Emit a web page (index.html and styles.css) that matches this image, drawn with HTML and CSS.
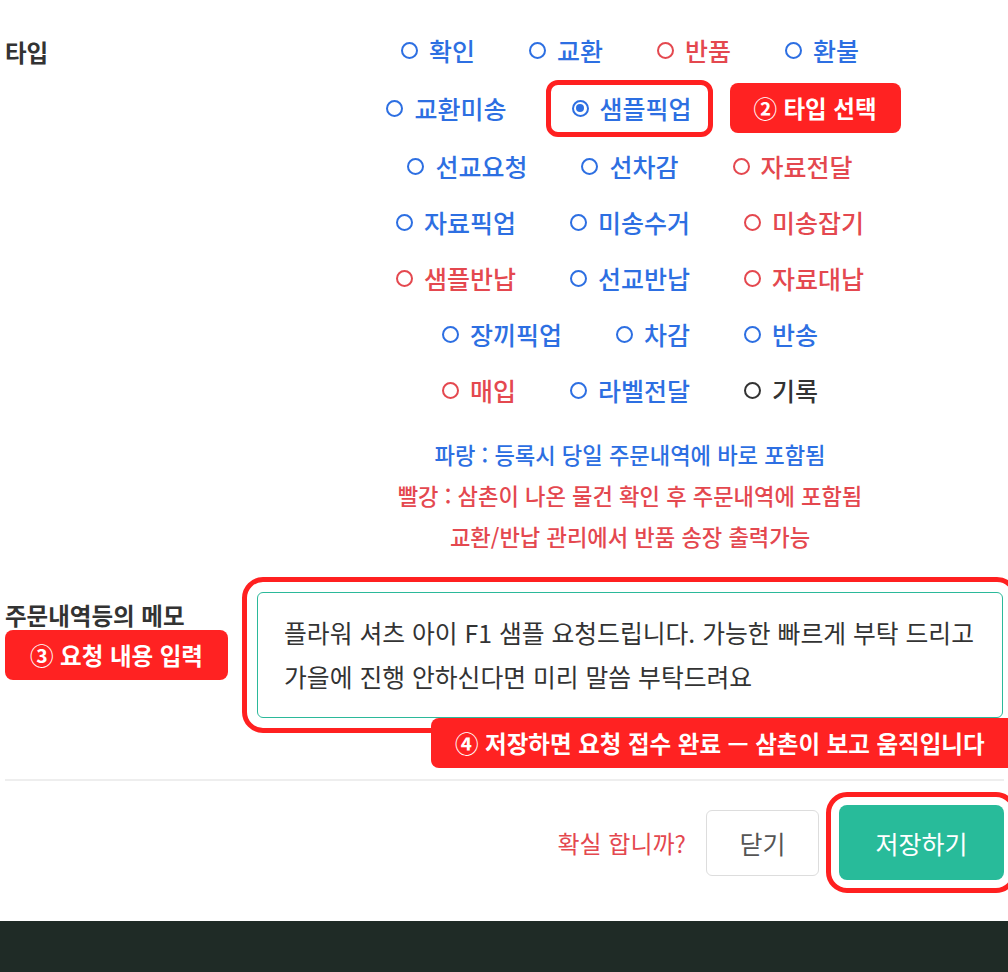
FILE: index.html
```html
<!DOCTYPE html>
<html lang="ko">
<head>
<meta charset="utf-8">
<title>타입 선택</title>
<link rel="stylesheet" href="styles.css">
</head>
<body>
<div class="page">
  <div class="field field-type">
    <div class="label">타입</div>
    <div class="control">
      <div class="opt-row">
        <span class="opt blue"><i class="radio"></i>확인</span>
        <span class="opt blue"><i class="radio"></i>교환</span>
        <span class="opt red"><i class="radio"></i>반품</span>
        <span class="opt blue"><i class="radio"></i>환불</span>
      </div>
      <div class="opt-row opt-row-sel">
        <span class="opt blue opt-before-sel"><i class="radio"></i>교환미송</span>
        <span class="opt blue opt-sel"><i class="radio checked"></i>샘플픽업</span>
        <span class="badge badge-type">② 타입 선택</span>
      </div>
      <div class="opt-row">
        <span class="opt blue"><i class="radio"></i>선교요청</span>
        <span class="opt blue"><i class="radio"></i>선차감</span>
        <span class="opt red"><i class="radio"></i>자료전달</span>
      </div>
      <div class="opt-row">
        <span class="opt blue"><i class="radio"></i>자료픽업</span>
        <span class="opt blue"><i class="radio"></i>미송수거</span>
        <span class="opt red"><i class="radio"></i>미송잡기</span>
      </div>
      <div class="opt-row">
        <span class="opt red"><i class="radio"></i>샘플반납</span>
        <span class="opt blue"><i class="radio"></i>선교반납</span>
        <span class="opt red"><i class="radio"></i>자료대납</span>
      </div>
      <div class="opt-row">
        <span class="opt blue"><i class="radio"></i>장끼픽업</span>
        <span class="opt blue"><i class="radio"></i>차감</span>
        <span class="opt blue"><i class="radio"></i>반송</span>
      </div>
      <div class="opt-row">
        <span class="opt red"><i class="radio"></i>매입</span>
        <span class="opt blue"><i class="radio"></i>라벨전달</span>
        <span class="opt dark"><i class="radio"></i>기록</span>
      </div>
      <div class="notes">
        <p class="note blue">파랑 : 등록시 당일 주문내역에 바로 포함됨</p>
        <p class="note red">빨강 : 삼촌이 나온 물건 확인 후 주문내역에 포함됨</p>
        <p class="note red">교환/반납 관리에서 반품 송장 출력가능</p>
      </div>
    </div>
  </div>

  <div class="field field-memo">
    <div class="label label-memo">
      <div>주문내역등의 메모</div>
      <span class="badge badge-memo">③ 요청 내용 입력</span>
    </div>
    <div class="control memo-wrap">
      <div class="memo-box">
        <div class="memo-line">플라워 셔츠 아이 F1 샘플 요청드립니다. 가능한 빠르게 부탁 드리고</div>
        <div class="memo-line">가을에 진행 안하신다면 미리 말씀 부탁드려요</div>
      </div>
      <span class="badge badge-save">④ 저장하면 요청 접수 완료 — 삼촌이 보고 움직입니다</span>
    </div>
  </div>

  <div class="actions">
    <span class="confirm">확실 합니까?</span>
    <button class="btn btn-close" type="button">닫기</button>
    <button class="btn btn-save" type="button">저장하기</button>
  </div>
</div>
<footer class="footer"></footer>
</body>
</html>
```

FILE: styles.css
```css
html {
  overflow: hidden;
}

body {
  margin: 0;
  background: #fff;
  font-family: "Noto Sans CJK KR", "Noto Sans", sans-serif;
  color: #333;
}

.page {
  padding: 22px 0 0 5px;
  width: 1003px;
}

.field {
  display: grid;
  grid-template-columns: 252px 746px;
}

.label {
  font-size: 23.5px;
  font-weight: 700;
  color: #333;
  line-height: 30px;
}

.field-type .label {
  padding-top: 15px;
}

.control {
  min-width: 0;
}

.opt-row {
  display: flex;
  justify-content: center;
  align-items: center;
  gap: 54px;
  height: 56px;
}

.opt-row-sel {
  height: 60px;
  gap: 0;
  padding-left: 27px;
}

.opt {
  display: inline-flex;
  align-items: center;
  gap: 11px;
  font-size: 25px;
  font-weight: 500;
  line-height: 30px;
  white-space: nowrap;
}

.blue { color: #2d6fe2; }
.red { color: #e4484f; }
.dark { color: #333; }

.radio {
  display: inline-block;
  box-sizing: border-box;
  width: 17px;
  height: 17px;
  border: 2px solid currentColor;
  border-radius: 50%;
  position: relative;
  flex: none;
}

.radio.checked::after {
  content: "";
  position: absolute;
  left: 2.5px;
  top: 2.5px;
  width: 8px;
  height: 8px;
  border-radius: 50%;
  background: currentColor;
}

.opt-before-sel {
  margin-right: 39px;
}

.opt-sel {
  box-sizing: border-box;
  width: 167px;
  height: 57px;
  border: 5px solid #ff2020;
  border-radius: 12px;
  padding: 0 0 0 21px;
  margin-right: 17px;
}

.badge {
  display: inline-flex;
  align-items: center;
  justify-content: center;
  background: #ff2222;
  color: #fff;
  font-weight: 700;
  font-size: 23.5px;
  border-radius: 8px;
  height: 50px;
  white-space: nowrap;
}

.badge-type {
  width: 171px;
}

.notes {
  margin-top: 16px;
  text-align: center;
}

.note {
  margin: 0;
  font-size: 22.2px;
  line-height: 41px;
  font-weight: 500;
}

.field-memo {
  margin-top: 35px;
}

.label-memo {
  padding-top: 8px;
}

.badge-memo {
  width: 223px;
}

.memo-wrap {
  position: relative;
}

.memo-box {
  box-sizing: border-box;
  height: 126px;
  border: 1.5px solid #2bb99a;
  border-radius: 6px;
  padding: 17px 20px 0 26px;
  outline: 5px solid #ff2020;
  outline-offset: 10px;
  font-size: 24.8px;
  line-height: 44px;
  color: #333;
}

.memo-line {
  white-space: nowrap;
}

.badge-save {
  position: absolute;
  top: 100%;
  left: 174px;
  right: -18px;
  border-radius: 8px 0 0 8px;
  justify-content: flex-start;
  padding-left: 24px;
}

.actions {
  margin-top: 61px;
  width: 999px;
  border-top: 2px solid #eeeeee;
  padding: 24px 0 41px;
  display: flex;
  justify-content: flex-end;
  align-items: center;
}

.confirm {
  color: #e4484f;
  font-size: 24px;
  margin-right: 20px;
}

.btn {
  font-family: inherit;
  font-size: 25px;
  cursor: pointer;
  box-sizing: border-box;
}

.btn-close {
  width: 113px;
  height: 66px;
  background: #fff;
  border: 1.5px solid #dddddd;
  border-radius: 6px;
  color: #555;
  margin-right: 20px;
}

.btn-save {
  width: 165px;
  height: 75px;
  background: #28bb9a;
  border: none;
  border-radius: 8px;
  color: #fff;
  outline: 5px solid #ff2020;
  outline-offset: 8px;
}

.footer {
  height: 60px;
  background: #1f2b26;
}
```
